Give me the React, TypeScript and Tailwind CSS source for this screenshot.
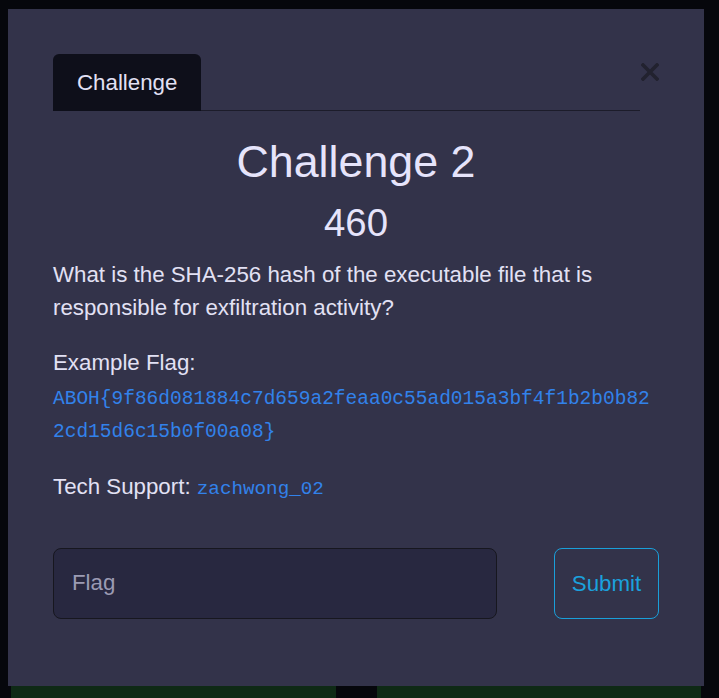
import React from "react";

export default function App() {
  return (
    <div
      className="relative w-[719px] h-[698px] overflow-hidden bg-[#06070c] flex flex-col justify-end"
      style={{ fontFamily: '"Liberation Sans", Arial, sans-serif' }}
    >
      {/* background page peeking below the modal */}
      <div className="flex h-[12px] pl-[11px] pr-[18px]">
        <div className="w-[325px] bg-[#0f2a16]" />
        <div className="w-[41px]" />
        <div className="flex-1 bg-[#0f2a16]" />
      </div>

      {/* modal */}
      <div className="absolute left-[8px] top-[9px] w-[696px] h-[677px] bg-[#33334a] px-[45px] pt-[45px] text-[22.3px] text-[#e2e1f4]">
        {/* tabs row */}
        <div className="flex items-start">
          <div className="flex flex-1 items-end border-b border-[#1c1c2a]">
            <div className="h-[57px] px-[24px] flex items-center rounded-t-[6px] bg-[#0e0f1a] text-[22.3px] text-[#e2e1f4] -mb-px">
              Challenge
            </div>
          </div>
          <button className="w-[19px] h-[57px] flex items-start justify-end pt-[9px]">
            <svg width="18" height="18" viewBox="0 0 18 18">
              <path d="M2 2 L16 16 M16 2 L2 16" stroke="#22222f" strokeWidth="3.6" strokeLinecap="square" />
            </svg>
          </button>
        </div>

        <h2 className="mt-[24px] text-center text-[44.8px] leading-[1.2] text-[#e6e4fb]">Challenge 2</h2>
        <h3 className="mt-[11px] text-center text-[38.4px] leading-[1.2] text-[#e6e4fb]">460</h3>

        <p className="mt-[12px] leading-[33px]">
          What is the SHA-256 hash of the executable file that is responsible for exfiltration activity?
        </p>

        <p className="mt-[22px] leading-[33px]">Example Flag:</p>
        <p
          className="mt-[4px] leading-[33px] text-[19.5px] text-[#3282ea] break-all"
          style={{ fontFamily: '"Liberation Mono", "Courier New", monospace' }}
        >
          ABOH{"{"}9f86d081884c7d659a2feaa0c55ad015a3bf4f1b2b0b822cd15d6c15b0f00a08{"}"}
        </p>

        <p className="mt-[21px] leading-[33px]">
          Tech Support:{" "}
          <span
            className="text-[19.25px] text-[#3282ea]"
            style={{ fontFamily: '"Liberation Mono", "Courier New", monospace' }}
          >
            zachwong_02
          </span>
        </p>

        <div className="mt-[42px] flex items-center justify-between">
          <input
            placeholder="Flag"
            className="w-[444px] h-[71px] rounded-[8px] border border-[#17171f] bg-[#282840] pl-[18px] text-[22.3px] text-[#e2e1f4] placeholder:text-[#9b9bb3] outline-none"
          />
          <button className="w-[105px] h-[71px] rounded-[8px] border border-[#1a9fd9] text-[22.3px] text-[#1ba1dd]">
            Submit
          </button>
        </div>
      </div>
    </div>
  );
}
